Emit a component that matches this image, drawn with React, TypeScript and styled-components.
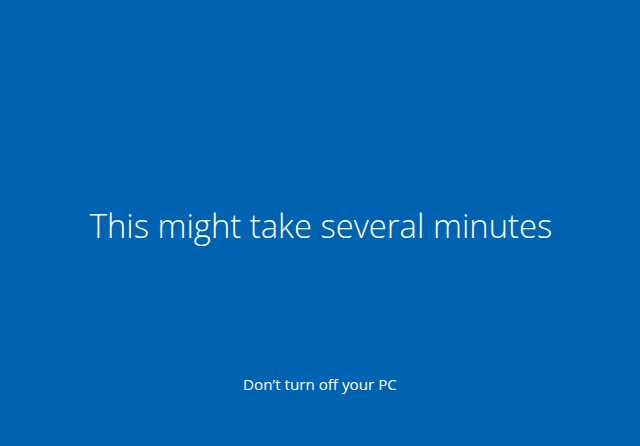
import React from "react";
import styled, { createGlobalStyle } from "styled-components";

const Global = createGlobalStyle`
  html, body { margin: 0; padding: 0; height: 100%; }
  body { background: #0063b1; }
  #root { height: 100%; }
`;

const Screen = styled.main`
  height: 446px;
  background: #0063b1;
  color: #ffffff;
  font-family: "Open Sans", "Noto Sans", sans-serif;
  display: flex;
  flex-direction: column;
  align-items: center;
`;

const Center = styled.div`
  flex: 1;
  display: flex;
  align-items: center;
  justify-content: center;
  padding-top: 76px;
  padding-left: 2px;
`;

const Title = styled.h1`
  margin: 0;
  font-size: 32.8px;
  font-weight: 300;
  letter-spacing: 0;
  line-height: 1;
`;

const Footer = styled.p`
  margin: 0 0 54px;
  font-size: 15.2px;
  font-weight: 400;
  line-height: 1;
`;

export default function App() {
  return (
    <>
      <Global />
      <Screen>
        <Center>
          <Title>This might take several minutes</Title>
        </Center>
        <Footer>Don’t turn off your PC</Footer>
      </Screen>
    </>
  );
}
